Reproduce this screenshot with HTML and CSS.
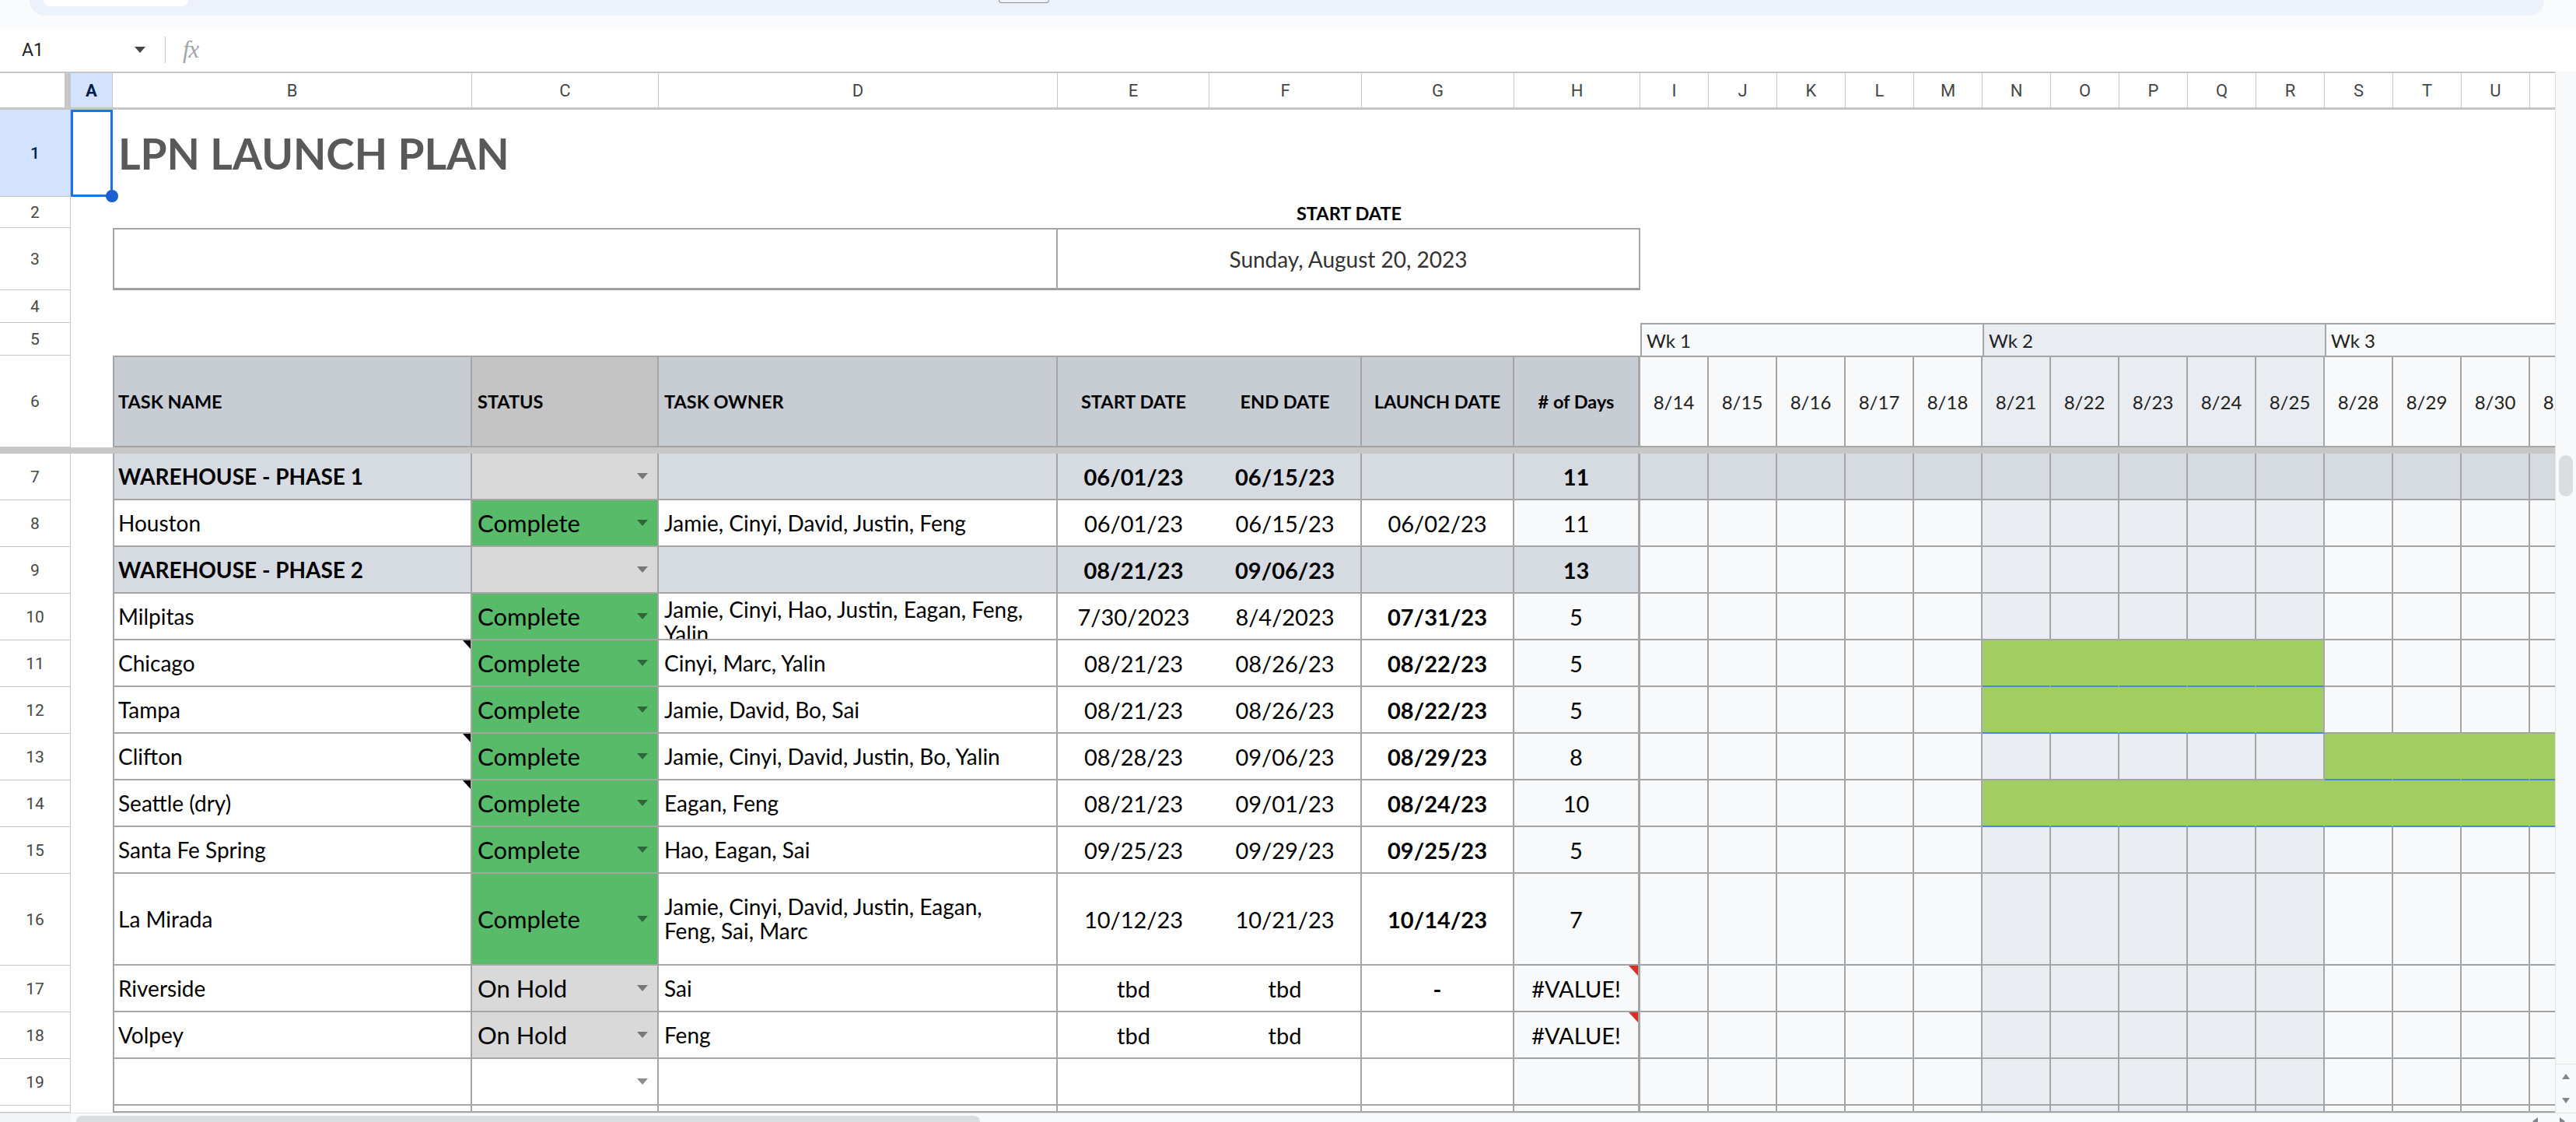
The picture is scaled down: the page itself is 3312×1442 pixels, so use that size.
FILE: index.html
```html
<!DOCTYPE html>
<html lang="en">
<head>
<meta charset="utf-8">
<title>LPN Launch Plan</title>
<link rel="stylesheet" href="styles.css">
</head>
<body>
<div class="topstrip"><div class="toolbar"><div class="tb-field"></div><div class="tb-btn"></div></div></div>
<div class="formula">
  <div class="namebox"><span>A1</span><i class="caret"></i></div>
  <span class="fx">fx</span>
</div>
<div class="main">
  <div class="grid">
    <div class="r hdr">
      <div class="c ch corner"></div><div class="c ch sel">A</div><div class="c ch">B</div><div class="c ch">C</div><div class="c ch">D</div><div class="c ch">E</div><div class="c ch">F</div><div class="c ch">G</div><div class="c ch">H</div><div class="c ch">I</div><div class="c ch">J</div><div class="c ch">K</div><div class="c ch">L</div><div class="c ch">M</div><div class="c ch">N</div><div class="c ch">O</div><div class="c ch">P</div><div class="c ch">Q</div><div class="c ch">R</div><div class="c ch">S</div><div class="c ch">T</div><div class="c ch">U</div><div class="c ch">V</div>
    </div>
    <div class="r h112">
      <div class="c rh sel">1</div><div class="c a1"></div><div class="c title">LPN LAUNCH PLAN</div>
    </div>
    <div class="r h40">
      <div class="c rh">2</div><div class="c sp-bd"></div><div class="c lbl">START DATE</div><div class="c sp-rest"></div>
    </div>
    <div class="r h80">
      <div class="c rh">3</div><div class="c"></div><div class="c box l sp-bdd"></div><div class="c box date">Sunday, August 20, 2023</div><div class="c sp-rest"></div>
    </div>
    <div class="r h42">
      <div class="c rh">4</div><div class="c sp-all"></div>
    </div>
    <div class="r h42">
      <div class="c rh">5</div><div class="c sp-ah"></div><div class="c wk wk5">Wk 1</div><div class="c wk w2 wk5">Wk 2</div><div class="c wk wk4">Wk 3</div>
    </div>
    <div class="r h118 head">
      <div class="c rh">6</div><div class="c"></div>
      <div class="c t b">TASK NAME</div><div class="c t s">STATUS</div><div class="c t o">TASK OWNER</div><div class="c t d e">START DATE</div><div class="c t d">END DATE</div><div class="c t d">LAUNCH DATE</div><div class="c t d n"># of Days</div>
      <span class="g">8/14</span><span class="g">8/15</span><span class="g">8/16</span><span class="g">8/17</span><span class="g">8/18</span><span class="g w2">8/21</span><span class="g w2">8/22</span><span class="g w2">8/23</span><span class="g w2">8/24</span><span class="g w2">8/25</span><span class="g">8/28</span><span class="g">8/29</span><span class="g">8/30</span><span class="g">8/31</span>
    </div>
    <div class="freeze"></div>
    <div class="r h60 phase">
      <div class="c rh">7</div><div class="c"></div>
      <div class="c t b">WAREHOUSE - PHASE 1</div><div class="c t s"><i class="dd"></i></div><div class="c t o"></div><div class="c t d e">06/01/23</div><div class="c t d">06/15/23</div><div class="c t d"></div><div class="c t d n">11</div>
      <span class="g ph"></span><span class="g ph"></span><span class="g ph"></span><span class="g ph"></span><span class="g ph"></span><span class="g ph"></span><span class="g ph"></span><span class="g ph"></span><span class="g ph"></span><span class="g ph"></span><span class="g ph"></span><span class="g ph"></span><span class="g ph"></span><span class="g ph"></span>
    </div>
    <div class="r h60">
      <div class="c rh">8</div><div class="c"></div>
      <div class="c t b">Houston</div><div class="c t s ok">Complete<i class="dd"></i></div><div class="c t o">Jamie, Cinyi, David, Justin, Feng</div><div class="c t d e">06/01/23</div><div class="c t d">06/15/23</div><div class="c t d">06/02/23</div><div class="c t d n">11</div>
      <span class="g"></span><span class="g"></span><span class="g"></span><span class="g"></span><span class="g"></span><span class="g w2"></span><span class="g w2"></span><span class="g w2"></span><span class="g w2"></span><span class="g w2"></span><span class="g"></span><span class="g"></span><span class="g"></span><span class="g"></span>
    </div>
    <div class="r h60 phase">
      <div class="c rh">9</div><div class="c"></div>
      <div class="c t b">WAREHOUSE - PHASE 2</div><div class="c t s"><i class="dd"></i></div><div class="c t o"></div><div class="c t d e">08/21/23</div><div class="c t d">09/06/23</div><div class="c t d"></div><div class="c t d n">13</div>
      <span class="g"></span><span class="g"></span><span class="g"></span><span class="g"></span><span class="g"></span><span class="g w2"></span><span class="g w2"></span><span class="g w2"></span><span class="g w2"></span><span class="g w2"></span><span class="g"></span><span class="g"></span><span class="g"></span><span class="g"></span>
    </div>
    <div class="r h60">
      <div class="c rh">10</div><div class="c"></div>
      <div class="c t b">Milpitas</div><div class="c t s ok">Complete<i class="dd"></i></div><div class="c t o wrap low"><span>Jamie, Cinyi, Hao, Justin, Eagan, Feng,</span><span>Yalin</span></div><div class="c t d e">7/30/2023</div><div class="c t d">8/4/2023</div><div class="c t d bold">07/31/23</div><div class="c t d n">5</div>
      <span class="g"></span><span class="g"></span><span class="g"></span><span class="g"></span><span class="g"></span><span class="g w2"></span><span class="g w2"></span><span class="g w2"></span><span class="g w2"></span><span class="g w2"></span><span class="g"></span><span class="g"></span><span class="g"></span><span class="g"></span>
    </div>
    <div class="r h60">
      <div class="c rh">11</div><div class="c"></div>
      <div class="c t b note">Chicago</div><div class="c t s ok">Complete<i class="dd"></i></div><div class="c t o">Cinyi, Marc, Yalin</div><div class="c t d e">08/21/23</div><div class="c t d">08/26/23</div><div class="c t d bold">08/22/23</div><div class="c t d n">5</div>
      <span class="g"></span><span class="g"></span><span class="g"></span><span class="g"></span><span class="g"></span><span class="g bar"></span><span class="g bar"></span><span class="g bar"></span><span class="g bar"></span><span class="g bar end"></span><span class="g"></span><span class="g"></span><span class="g"></span><span class="g"></span>
    </div>
    <div class="r h60">
      <div class="c rh">12</div><div class="c"></div>
      <div class="c t b">Tampa</div><div class="c t s ok">Complete<i class="dd"></i></div><div class="c t o">Jamie, David, Bo, Sai</div><div class="c t d e">08/21/23</div><div class="c t d">08/26/23</div><div class="c t d bold">08/22/23</div><div class="c t d n">5</div>
      <span class="g"></span><span class="g"></span><span class="g"></span><span class="g"></span><span class="g"></span><span class="g bar"></span><span class="g bar"></span><span class="g bar"></span><span class="g bar"></span><span class="g bar end"></span><span class="g"></span><span class="g"></span><span class="g"></span><span class="g"></span>
    </div>
    <div class="r h60">
      <div class="c rh">13</div><div class="c"></div>
      <div class="c t b note">Clifton</div><div class="c t s ok">Complete<i class="dd"></i></div><div class="c t o">Jamie, Cinyi, David, Justin, Bo, Yalin</div><div class="c t d e">08/28/23</div><div class="c t d">09/06/23</div><div class="c t d bold">08/29/23</div><div class="c t d n">8</div>
      <span class="g"></span><span class="g"></span><span class="g"></span><span class="g"></span><span class="g"></span><span class="g w2"></span><span class="g w2"></span><span class="g w2"></span><span class="g w2"></span><span class="g w2"></span><span class="g bar"></span><span class="g bar"></span><span class="g bar"></span><span class="g bar"></span>
    </div>
    <div class="r h60">
      <div class="c rh">14</div><div class="c"></div>
      <div class="c t b note">Seattle (dry)</div><div class="c t s ok">Complete<i class="dd"></i></div><div class="c t o">Eagan, Feng</div><div class="c t d e">08/21/23</div><div class="c t d">09/01/23</div><div class="c t d bold">08/24/23</div><div class="c t d n">10</div>
      <span class="g"></span><span class="g"></span><span class="g"></span><span class="g"></span><span class="g"></span><span class="g bar"></span><span class="g bar"></span><span class="g bar"></span><span class="g bar"></span><span class="g bar"></span><span class="g bar"></span><span class="g bar"></span><span class="g bar"></span><span class="g bar"></span>
    </div>
    <div class="r h60">
      <div class="c rh">15</div><div class="c"></div>
      <div class="c t b">Santa Fe Spring</div><div class="c t s ok">Complete<i class="dd"></i></div><div class="c t o">Hao, Eagan, Sai</div><div class="c t d e">09/25/23</div><div class="c t d">09/29/23</div><div class="c t d bold">09/25/23</div><div class="c t d n">5</div>
      <span class="g"></span><span class="g"></span><span class="g"></span><span class="g"></span><span class="g"></span><span class="g w2"></span><span class="g w2"></span><span class="g w2"></span><span class="g w2"></span><span class="g w2"></span><span class="g"></span><span class="g"></span><span class="g"></span><span class="g"></span>
    </div>
    <div class="r h118">
      <div class="c rh">16</div><div class="c"></div>
      <div class="c t b">La Mirada</div><div class="c t s ok">Complete<i class="dd"></i></div><div class="c t o wrap"><span>Jamie, Cinyi, David, Justin, Eagan,</span><span>Feng, Sai, Marc</span></div><div class="c t d e">10/12/23</div><div class="c t d">10/21/23</div><div class="c t d bold">10/14/23</div><div class="c t d n">7</div>
      <span class="g"></span><span class="g"></span><span class="g"></span><span class="g"></span><span class="g"></span><span class="g w2"></span><span class="g w2"></span><span class="g w2"></span><span class="g w2"></span><span class="g w2"></span><span class="g"></span><span class="g"></span><span class="g"></span><span class="g"></span>
    </div>
    <div class="r h60">
      <div class="c rh">17</div><div class="c"></div>
      <div class="c t b">Riverside</div><div class="c t s hold">On Hold<i class="dd"></i></div><div class="c t o">Sai</div><div class="c t d e">tbd</div><div class="c t d">tbd</div><div class="c t d bold">-</div><div class="c t d n err">#VALUE!</div>
      <span class="g"></span><span class="g"></span><span class="g"></span><span class="g"></span><span class="g"></span><span class="g w2"></span><span class="g w2"></span><span class="g w2"></span><span class="g w2"></span><span class="g w2"></span><span class="g"></span><span class="g"></span><span class="g"></span><span class="g"></span>
    </div>
    <div class="r h60">
      <div class="c rh">18</div><div class="c"></div>
      <div class="c t b">Volpey</div><div class="c t s hold">On Hold<i class="dd"></i></div><div class="c t o">Feng</div><div class="c t d e">tbd</div><div class="c t d">tbd</div><div class="c t d"></div><div class="c t d n err">#VALUE!</div>
      <span class="g"></span><span class="g"></span><span class="g"></span><span class="g"></span><span class="g"></span><span class="g w2"></span><span class="g w2"></span><span class="g w2"></span><span class="g w2"></span><span class="g w2"></span><span class="g"></span><span class="g"></span><span class="g"></span><span class="g"></span>
    </div>
    <div class="r h60">
      <div class="c rh">19</div><div class="c"></div>
      <div class="c t b"></div><div class="c t s"><i class="dd"></i></div><div class="c t o"></div><div class="c t d e"></div><div class="c t d"></div><div class="c t d"></div><div class="c t d n"></div>
      <span class="g"></span><span class="g"></span><span class="g"></span><span class="g"></span><span class="g"></span><span class="g w2"></span><span class="g w2"></span><span class="g w2"></span><span class="g w2"></span><span class="g w2"></span><span class="g"></span><span class="g"></span><span class="g"></span><span class="g"></span>
    </div>
    <div class="r h9">
      <div class="c rh"></div><div class="c"></div>
      <div class="c t b"></div><div class="c t s"></div><div class="c t o"></div><div class="c t d e"></div><div class="c t d"></div><div class="c t d"></div><div class="c t d n"></div>
      <span class="g"></span><span class="g"></span><span class="g"></span><span class="g"></span><span class="g"></span><span class="g w2"></span><span class="g w2"></span><span class="g w2"></span><span class="g w2"></span><span class="g w2"></span><span class="g"></span><span class="g"></span><span class="g"></span><span class="g"></span>
    </div>
  </div>
  <div class="vscroll">
    <div class="thumb-v"></div>
    <div class="vs-arrows"><i class="tri-up"></i><i class="tri-down"></i></div>
  </div>
</div>
<div class="hscroll">
  <div class="hs-left"></div>
  <div class="thumb-h"></div>
  <div class="hs-arrows"><i class="tri-left"></i><i class="tri-right"></i></div>
</div>
</body>
</html>
```
FILE: styles.css
```css
* { box-sizing: border-box; margin: 0; padding: 0; }
:root {
  --cols: 91px 54px 462px 240px 513px 195px 196px 196px 162px repeat(14, 88px);
  --ln: #a5a5a5;
  --hl: #c4c7c5;
}
body {
  width: 3312px;
  height: 1442px;
  overflow: hidden;
  background: #fff;
  font-family: Lato, "DejaVu Sans", sans-serif;
  color: #000;
}
i { font-style: normal; display: block; }

/* top toolbar remnant */
.topstrip { height: 36px; background: #f9fbfd; padding: 0 41px 0 38px; }
.toolbar { height: 20px; background: #edf2fa; border-radius: 0 0 24px 24px; display: flex; padding-left: 18px; }
.tb-field { width: 186px; height: 8px; background: #fff; border-radius: 0 0 10px 10px; }
.tb-btn { margin-left: 1042px; width: 65px; height: 4px; border: 1px solid #8e918f; border-top: none; border-radius: 0 0 5px 5px; }

/* formula bar */
.formula { height: 56px; display: flex; align-items: center; font-family: Roboto, "Liberation Sans", sans-serif; }
.namebox { width: 213px; height: 34px; display: flex; align-items: center; padding-left: 28px; font-size: 23px; color: #1f1f1f; border-right: 1px solid var(--hl); }
.caret { margin-left: auto; margin-right: 25px; width: 0; height: 0; border-left: 7px solid transparent; border-right: 7px solid transparent; border-top: 8px solid #444746; }
.fx { margin-left: 22px; font-family: "Liberation Serif", serif; font-style: italic; font-size: 31px; color: #a0a4a8; letter-spacing: -1px; }

/* sheet */
.main { display: flex; height: 1338px; }
.grid { width: 3285px; overflow: hidden; flex: none; }
.r { display: grid; grid-template-columns: var(--cols); }
.hdr { height: 49px; }
.h112 { height: 112px; }
.h40 { height: 40px; }
.h80 { height: 80px; }
.h42 { height: 42px; }
.h118 { height: 118px; }
.h60 { height: 60px; }
.h9 { height: 9px; }

.c { display: flex; align-items: center; min-width: 0; overflow: hidden; white-space: nowrap; }

.ch { justify-content: center; font-family: Roboto, "Liberation Sans", sans-serif; font-size: 22px; color: #444746; border-right: 1px solid var(--hl); border-top: 2px solid var(--hl); border-bottom: 3px solid var(--hl); }
.ch.corner { border-right: 8px solid #c7c7c7; }
.ch.sel { background: #d3e3fd; color: #041e49; font-weight: 700; }

.rh { justify-content: center; font-family: Roboto, "Liberation Sans", sans-serif; font-size: 21px; color: #444746; border-right: 1px solid var(--hl); border-bottom: 1px solid var(--hl); }
.rh.sel { background: #d3e3fd; color: #041e49; font-weight: 500; }

.a1 { border: 3px solid #1a73e8; position: relative; overflow: visible; }
.a1::after { content: ""; position: absolute; right: -10px; bottom: -10px; width: 16px; height: 16px; border-radius: 50%; background: #1b5fd1; z-index: 2; }

.title { grid-column: 3 / -1; padding-left: 7px; font-size: 55px; font-weight: 700; color: #595959; }

.sp-bd { grid-column: 2 / 6; }
.sp-bdd { grid-column: 3 / 6; }
.sp-rest { grid-column: 10 / -1; }
.sp-all { grid-column: 2 / -1; }
.sp-ah { grid-column: 2 / 10; }

.lbl { grid-column: 6 / 10; justify-content: center; font-weight: 700; font-size: 23.5px; padding-top: 2px; }

.box { border-top: 2px solid var(--ln); border-right: 2px solid var(--ln); border-bottom: 3px solid #9e9e9e; }
.box.l { border-left: 2px solid var(--ln); }
.box.date { grid-column: 6 / 10; justify-content: center; font-size: 28px; color: #333; }

.wk { background: #f8f9fa; border-top: 2px solid var(--ln); border-left: 2px solid var(--ln); padding-left: 6px; font-size: 24px; color: #222; }
.wk5 { grid-column: span 5; }
.wk4 { grid-column: span 4; }
.wk.w2 { background: #e9ecf0; }

.freeze { height: 8px; background: #c7c7c7; }

/* table cells */
.t { border-right: 2px solid var(--ln); border-bottom: 2px solid var(--ln); padding: 0 7px; }
.t.b { border-left: 2px solid var(--ln); padding-left: 5px; font-size: 28px; }
.t.s { font-size: 31px; }
.t.s.ok { background: #57bb6a; }
.t.s.hold { background: #d9d9d9; }
.dd { margin-left: auto; margin-right: 5px; width: 0; height: 0; flex: none; border-left: 7px solid transparent; border-right: 7px solid transparent; border-top: 8px solid rgba(0, 0, 0, 0.45); }
.t.o { font-size: 28px; }
.t.o.wrap { flex-direction: column; align-items: flex-start; justify-content: center; line-height: 31px; }
.t.o.low { padding-top: 14px; }
.t.d { justify-content: center; font-size: 29px; padding: 0; }
.t.e { border-right: none; }
.t.n { background: #f8f9fa; border-right: 3px solid var(--ln); }
.bold { font-weight: 700; }

.phase .t { background: #d6dbe1; font-weight: 700; }
.phase .t.s { background: #d9d9d9; }

.head .c.t { background: #c8cdd4; font-weight: 700; font-size: 23.5px; border-top: 2px solid var(--ln); }
.head .c.t.s { background: #c4c4c4; }

.note, .err { position: relative; }
.note::after { content: ""; position: absolute; top: 0; right: 0; border-top: 11px solid #000; border-left: 10px solid transparent; }
.err::after { content: ""; position: absolute; top: 0; right: 0; border-top: 13px solid #d93025; border-left: 12px solid transparent; }

/* gantt */
.g { display: flex; align-items: center; justify-content: center; overflow: hidden; white-space: nowrap; background: #f8f9fa; border-right: 2px solid var(--ln); border-bottom: 2px solid var(--ln); font-size: 24px; color: #222; }
.g.w2 { background: #e9ecf0; }
.g.ph { background: #d6dbe1; }
.g.bar { background: #a0ce63; border-right-color: #a0ce63; border-bottom-color: #4a86e8; }
.g.bar.end { border-right-color: var(--ln); }
.head .g { border-top: 2px solid var(--ln); }

/* scrollbars */
.vscroll { width: 27px; flex: none; background: #f8f9fa; border-left: 1px solid #e1e3e1; display: flex; flex-direction: column; align-items: center; }
.thumb-v { margin-top: 493px; width: 18px; height: 53px; border-radius: 9px; background: #dadce0; }
.vs-arrows { margin-top: auto; width: 100%; height: 63px; border-top: 1px solid #e1e3e1; display: flex; flex-direction: column; align-items: center; justify-content: space-around; }
.tri-up { width: 0; height: 0; border-left: 5px solid transparent; border-right: 5px solid transparent; border-bottom: 7px solid #80868b; }
.tri-down { width: 0; height: 0; border-left: 5px solid transparent; border-right: 5px solid transparent; border-top: 7px solid #80868b; }

.hscroll { height: 12px; display: flex; background: #f8f9fa; border-top: 1px solid #e1e3e1; }
.hs-left { width: 91px; background: #f1f3f4; flex: none; }
.thumb-h { margin-left: 7px; margin-top: 3px; width: 1162px; height: 16px; border-radius: 9px; background: #dadce0; flex: none; }
.hs-arrows { margin-left: auto; width: 70px; display: flex; justify-content: space-around; align-items: flex-end; }
.tri-left { width: 0; height: 0; border-top: 5px solid transparent; border-bottom: 5px solid transparent; border-right: 7px solid #80868b; margin-bottom: -4px; }
.tri-right { width: 0; height: 0; border-top: 5px solid transparent; border-bottom: 5px solid transparent; border-left: 7px solid #80868b; margin-bottom: -4px; }
```
